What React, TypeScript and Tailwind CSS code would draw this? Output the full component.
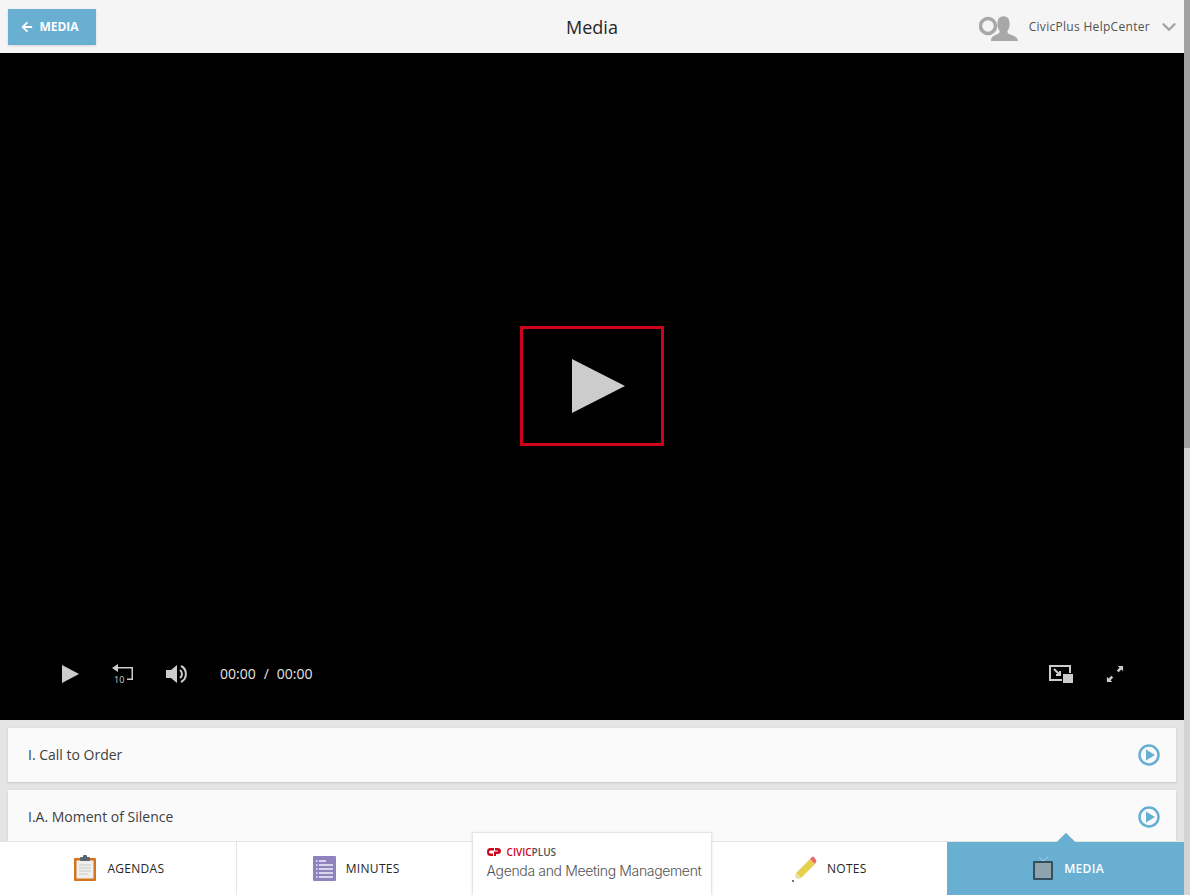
import { ChevronDown } from 'lucide-react';
import { FaArrowLeft } from 'react-icons/fa';

function ClipboardIcon() {
  return (
    <svg width="24" height="27" viewBox="0 0 24 27">
      <rect x="1" y="3" width="22" height="23" rx="1" fill="#d5741e" />
      <rect x="3.500" y="5.500" width="17" height="18" fill="#efefef" />
      <rect x="7" y="2" width="10" height="4" rx="1" fill="#5d6670" />
      <rect x="10" y="0" width="4" height="3" rx="1" fill="#5d6670" />
      <path d="M6 10h12M6 13h12M6 16h12M6 19h9" stroke="#c9c9c9" strokeWidth="1" />
    </svg>
  );
}

function ListIcon() {
  return (
    <svg width="23" height="25" viewBox="0 0 23 25">
      <rect width="23" height="25" rx="1" fill="#8f83bd" />
      <path d="M6 5h7M6 9h14M6 13h14M6 17h14M6 21h14" stroke="#f1eff8" strokeWidth="1.500" />
      <path d="M3 5h1.500M3 9h1.500M3 13h1.500M3 17h1.500M3 21h1.500" stroke="#f1eff8" strokeWidth="1.500" />
    </svg>
  );
}

function PencilIcon() {
  return (
    <svg width="26" height="26" viewBox="0 0 26 26">
      <path d="M5 17 19 3l5 5-14 14z" fill="#e6cf4e" />
      <path d="M19 3l2-2a1.500 1.500 0 0 1 2 0l2 3a1.500 1.500 0 0 1 0 2l-1 2z" fill="#e8696b" />
      <path d="M5 17l5 5-3 1-3-2z" fill="#ecdca0" />
      <circle cx="2" cy="25" r="1" fill="#444" />
    </svg>
  );
}

function TvIcon() {
  return (
    <svg width="21" height="25" viewBox="0 0 21 25">
      <path d="M6 1l4 4 5-4" stroke="#a9cfe3" strokeWidth="1" fill="none" />
      <rect y="5" width="20" height="19" rx="1" fill="#34505f" />
      <rect x="2" y="7" width="16" height="15" fill="#8fa3ae" />
    </svg>
  );
}

function PlayCircle() {
  return (
    <svg width="22" height="22" viewBox="0 0 22 22">
      <circle cx="11" cy="11" r="9.500" fill="none" stroke="#64afd2" strokeWidth="2.500" />
      <path d="M8 5.500 17 11l-9 5.500z" fill="#64afd2" />
    </svg>
  );
}

function UserIcon() {
  return (
    <svg width="40" height="30" viewBox="0 0 40 30">
      <circle cx="9" cy="14" r="7.500" fill="none" stroke="#a8a8a8" strokeWidth="3.500" />
      <path d="M12 29c0-3 1-5 7-7 2-1 2-3 1-4-2-3-2-6-1-10 1-5 10-5 11 0 1 4 1 7-1 10-1 1-1 3 1 4 6 2 9 4 9 7z" fill="#a8a8a8" />
    </svg>
  );
}

function AgendaRow({ title }: { title: string }) {
  return (
    <div className="flex h-[54px] shrink-0 items-center justify-between bg-neutral-50 pr-4 pl-5 shadow">
      <span className="text-sm text-neutral-700">{title}</span>
      <PlayCircle />
    </div>
  );
}

export default function App() {
  return (
    <div className="flex h-screen overflow-hidden bg-neutral-200 font-['Open_Sans',sans-serif]">
      <div className="relative flex min-w-0 flex-1 flex-col overflow-hidden">
        <header className="relative flex h-[53px] shrink-0 items-center justify-between bg-neutral-100 pr-1 pl-2">
          <button className="flex h-9 w-[88px] items-center justify-center gap-1.5 bg-[#69afd2] pr-1 text-xs font-bold text-white shadow">
            <FaArrowLeft size={12} />
            MEDIA
          </button>
          <h1 className="absolute left-0 right-0 text-center text-lg text-neutral-800">Media</h1>
          <div className="flex items-center gap-2">
            <div className="mr-0.5">
              <UserIcon />
            </div>
            <span className="text-xs tracking-wide text-neutral-600">CivicPlus HelpCenter</span>
            <ChevronDown size={22} strokeWidth={2.500} className="text-neutral-400" />
          </div>
        </header>

        <div className="relative flex h-[667px] shrink-0 items-center justify-center bg-black pb-0.5">
          <div className="flex h-30 w-36 items-center justify-center border-3 border-[#d0021b] pl-3">
            <svg width="54" height="54" viewBox="0 0 54 54">
              <path d="M1 0 54 27 1 54z" fill="#cccccc" />
            </svg>
          </div>
          <div className="absolute right-0 bottom-8 left-0 flex h-7 items-center justify-between pr-15 pl-15 text-neutral-200">
            <div className="flex items-center gap-8">
              <svg width="20" height="20" viewBox="0 0 20 20">
                <path d="M2 1 19 10 2 19z" fill="#cccccc" />
              </svg>
              <svg width="22" height="22" viewBox="0 0 22 22">
                <path d="M0 5 6 1v3h15v13h-6v-1.500h4.500V5.500H6V9z" fill="#cccccc" />
                <text x="2" y="20" fontSize="9" fill="#cccccc">10</text>
              </svg>
              <svg width="22" height="22" viewBox="0 0 22 22">
                <path d="M0 7h5l6-5v18l-6-5H0z" fill="#cccccc" />
                <path d="M14 7a5 5 0 0 1 0 8M15 3a9 9 0 0 1 0 16" fill="none" stroke="#cccccc" strokeWidth="2" />
              </svg>
              <span className="flex gap-2 text-sm">
                <span>00:00</span>
                <span>/</span>
                <span>00:00</span>
              </span>
            </div>
            <div className="flex items-center gap-8">
              <svg width="26" height="20" viewBox="0 0 26 20">
                <path d="M14 16H2V2h20v7" fill="none" stroke="#cccccc" strokeWidth="2" />
                <path d="m6 5 6 6M12 7v4H8" fill="none" stroke="#cccccc" strokeWidth="2" />
                <rect x="15" y="10" width="10" height="9" fill="#cccccc" />
              </svg>
              <svg width="18" height="18" viewBox="0 0 20 20">
                <path d="M13 1h6v6l-2-2-3 3-2-2 3-3zM7 19H1v-6l2 2 3-3 2 2-3 3z" fill="#cccccc" />
              </svg>
            </div>
          </div>
        </div>

        <div className="flex flex-col gap-2 px-2 pt-2">
          <AgendaRow title="I. Call to Order" />
          <AgendaRow title="I.A. Moment of Silence" />
        </div>

        <nav className="absolute right-0 bottom-0 left-0 grid h-[54px] grid-cols-5 border-t border-neutral-200 bg-white text-xs tracking-wide text-neutral-800">
          <div className="flex items-center justify-center gap-2.5 border-r border-neutral-200 pl-0.5">
            <ClipboardIcon />
            <span>AGENDAS</span>
          </div>
          <div className="flex items-center justify-center gap-2.5 pl-0.5">
            <ListIcon />
            <span>MINUTES</span>
          </div>
          <div className="relative -mx-0.5 -mt-2.5 flex flex-col justify-center border-x border-t border-neutral-200 bg-white px-3.5 shadow-sm">
            <div className="flex items-center gap-1.5">
              <svg width="14" height="8" viewBox="0 0 14 8">
                <path d="M7 0H3.500a3.500 4 0 0 0 0 8H6V5.500H3.500a1.500 1.500 0 0 1 0-3H7z" fill="#d0021b" />
                <path d="M8 0h2.500a3.500 3 0 0 1 0 6H9v2H7V3.500h3.500a.5.5 0 0 0 0-1H8z" fill="#d0021b" />
              </svg>
              <span className="text-[10px] leading-none font-semibold tracking-normal">
                <span className="text-[#d0021b]">CIVIC</span>
                <span className="text-neutral-600">PLUS</span>
              </span>
            </div>
            <span className="mt-1 font-['Inter',sans-serif] text-sm font-light tracking-tight whitespace-nowrap text-neutral-600">
              Agenda and Meeting Management
            </span>
          </div>
          <div className="flex items-center justify-center gap-2.5">
            <PencilIcon />
            <span>NOTES</span>
          </div>
          <div className="relative flex items-center justify-center gap-2.5 bg-[#69afd2] pl-1.5 font-semibold text-white">
            <div className="absolute -top-2 left-1/2 size-4 -translate-x-1/2 translate-y-0.5 rotate-45 bg-[#69afd2]" />
            <TvIcon />
            <span>MEDIA</span>
          </div>
        </nav>
      </div>

      <div className="w-1.5 shrink-0 bg-neutral-300">
        <div className="h-[448px] bg-neutral-400" />
      </div>
    </div>
  );
}
